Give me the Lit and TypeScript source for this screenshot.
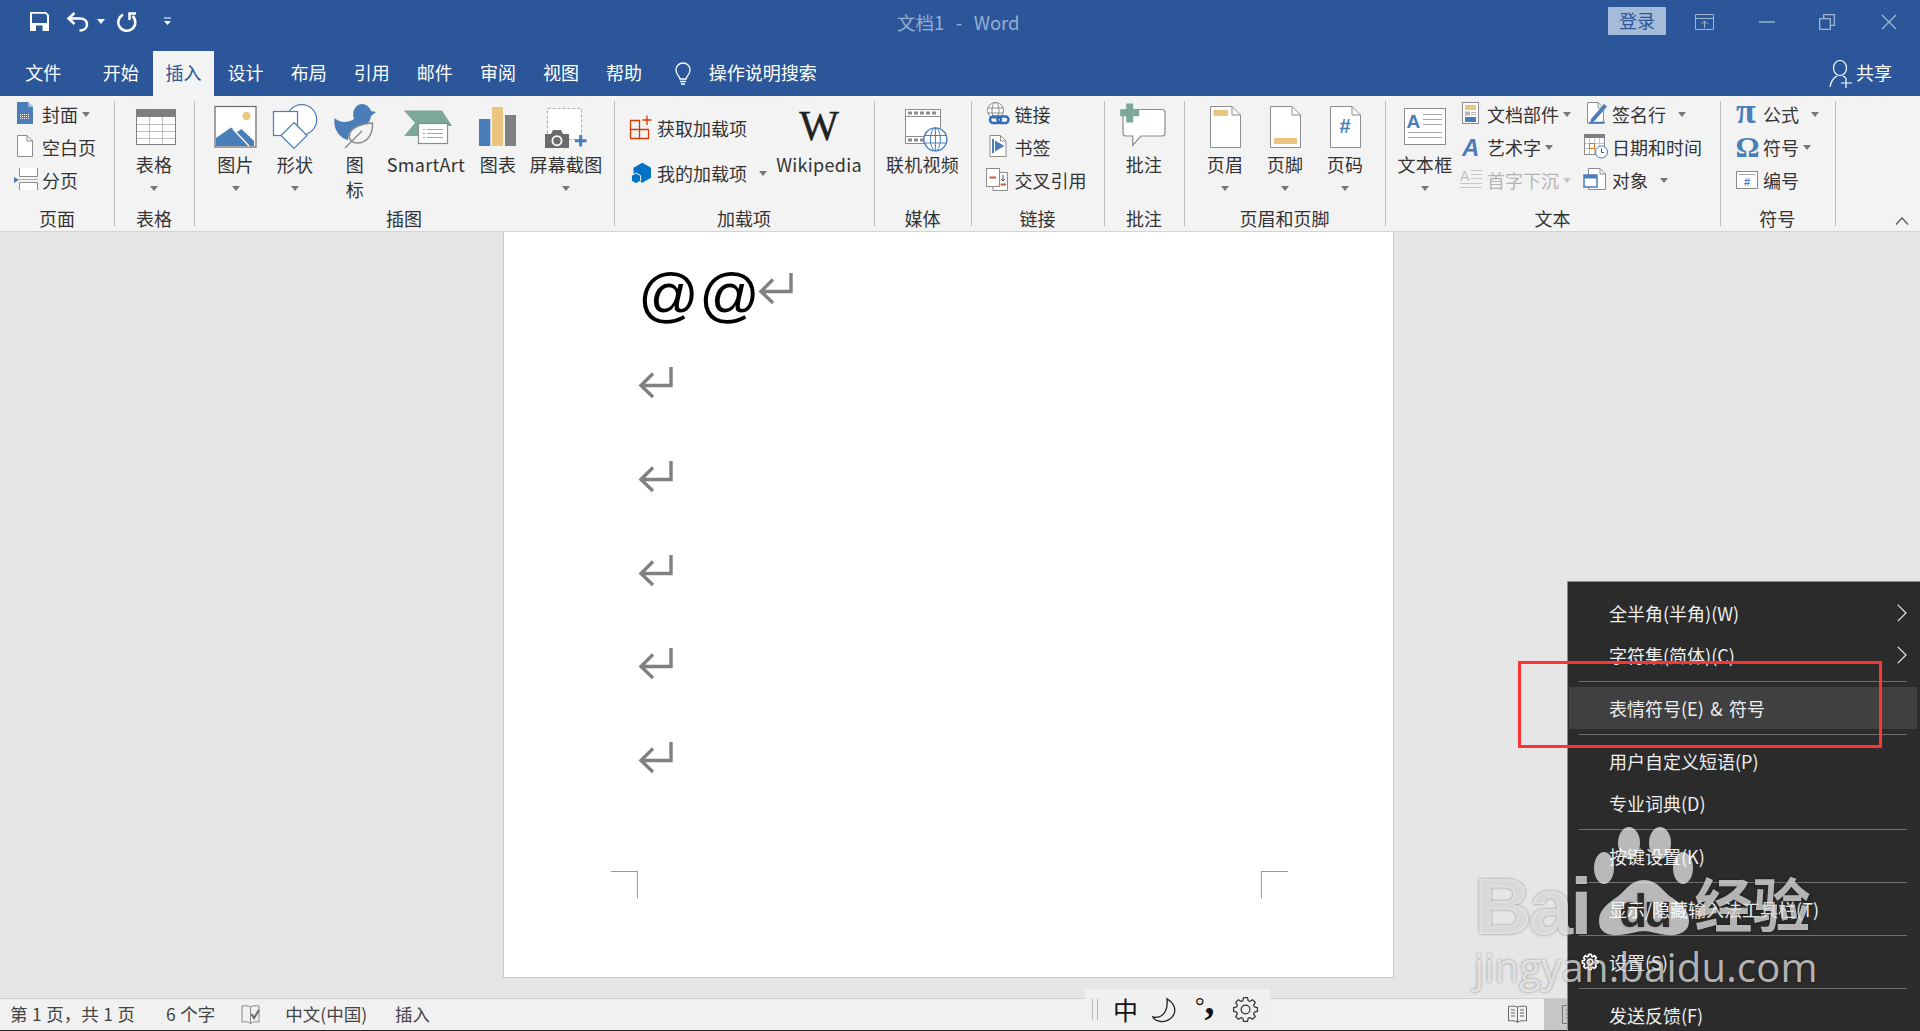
import { LitElement, html, css, svg } from "lit";
import { customElement } from "lit/decorators.js";

const B = "#4A7EB8";
const O = "#EBC57F";
const G = "#7F7F7F";
const T = "#7AA998";
const F = "#8C8C8C";

const pageFold = (x: number, y: number, w: number, h: number, f = 9, stroke = F) => svg`
  <path d="M${x + .5} ${y + .5}H${x + w - f}L${x + w - .5} ${y + f}V${y + h - .5}H${x + .5}Z" fill="#fff" stroke="${stroke}"/>
  <path d="M${x + w - f} ${y + .5}V${y + f}H${x + w - .5}" fill="none" stroke="${stroke}"/>`;

const lgIcons: Record<string, any> = {
  table: svg`<rect x="12.5" y="9.5" width="39" height="35" fill="#fff" stroke="${G}"/><rect x="12" y="9" width="40" height="8" fill="${G}"/>
    <path d="M13 24.5H51M13 31.5H51M13 38.5H51M25.5 17V44M38.5 17V44" stroke="#BDBDBD" fill="none"/>`,
  picture: svg`<rect x="9" y="6.5" width="41" height="40.5" fill="#fff" stroke="#666" stroke-width="1.2"/><ellipse cx="40.5" cy="16" rx="4" ry="4.3" fill="${O}"/>
    <path d="M10 46V38L25 27.5 31 32 35.5 29 48 41V46Z" fill="${B}"/><path d="M27 29L43 46" stroke="#fff" stroke-width="1.3"/>`,
  shapes: svg`<circle cx="36.7" cy="19.7" r="15" fill="#fff" stroke="${B}" stroke-width="1.2"/><rect x="8.5" y="11.5" width="24" height="24" fill="#fff" stroke="${B}" stroke-width="1.2"/>
    <path d="M29 22.5L42 35.5 29 48.5 16 35.5Z" fill="#fff" stroke="${B}" stroke-width="1.2"/>`,
  icons: svg`<path d="M9.5 18C13 22 22 24 29 19C26 10 32 4 37 4C42 4 45 8 46 11L51 12L46 16C45 24 40 26 36 27L24 33L23 40C15 38 8 30 9.5 18Z" fill="${B}"/>
    <path d="M47.5 23C48 35 42 43 32 43C26 43 23 38 25 33C28 26 38 24 47.5 23Z" fill="#F3F3F3" stroke="${F}" stroke-width="1.5"/><path d="M37 31L20 48" stroke="${F}" stroke-width="1.5"/>`,
  smartart: svg`<path d="M8 10.5H46L56 26H30V36H8L19 23Z" fill="${T}"/><rect x="22.5" y="23.5" width="29" height="20" fill="#fff" stroke="${F}" stroke-width="1.2"/>
    <path d="M27 29.5H29M31 29.5H47M27 33.5H29M31 33.5H47M27 37.5H29M31 37.5H47" stroke="#A6A6A6"/>`,
  chart: svg`<rect x="11" y="19" width="11.3" height="27" fill="${B}"/><rect x="24" y="7" width="11" height="39" fill="${O}"/><rect x="37" y="15" width="11" height="31" fill="${G}"/>`,
  screenshot: svg`<rect x="11.5" y="8.5" width="34" height="31" fill="#fff" stroke="#ABABAB" stroke-dasharray="3 2"/>
    <path d="M9 34H15L17 30H25L27 34H33V48H9Z" fill="#6B6B6B"/><circle cx="21" cy="40.7" r="4.6" fill="#6B6B6B" stroke="#fff" stroke-width="1.8"/>
    <path d="M44.7 35V46.5M39 40.7H50.5" stroke="${B}" stroke-width="3"/>`,
  video: svg`<rect x="12.5" y="9.5" width="35" height="34" fill="#fff" stroke="${F}"/><path d="M12 16.5H48M12 36.5H48" stroke="${F}"/>
    <path d="M15 11.5h4v3h-4zM21 11.5h4v3h-4zM27 11.5h4v3h-4zM33 11.5h4v3h-4zM39 11.5h4v3h-4zM15 38.5h4v3h-4zM21 38.5h4v3h-4zM27 38.5h4v3h-4z" fill="${F}"/>
    <circle cx="42.4" cy="39.3" r="11.5" fill="#fff" stroke="${B}" stroke-width="1.3"/><ellipse cx="42.4" cy="39.3" rx="5" ry="11.5" fill="none" stroke="${B}"/>
    <path d="M31.5 35.5H53.5M31.5 43H53.5M42.4 28V51" stroke="${B}"/>`,
  comment: svg`<path d="M12 9.5H48Q51 9.5 51 12.5V33Q51 36 48 36H27L18.7 45.5V36H12Q9 36 9 33V12.5Q9 9.5 12 9.5Z" fill="#fff" stroke="${F}" stroke-width="1.2"/>
    <path d="M15.7 3.5V22.5M6.2 12.7H25.2" stroke="${T}" stroke-width="7"/>`,
  header: svg`${pageFold(15, 6, 31, 42)}<rect x="18.5" y="10" width="14.5" height="6" fill="${O}"/>`,
  footer: svg`${pageFold(15, 6, 31, 42)}<rect x="19" y="38" width="23" height="6" fill="${O}"/>`,
  pagenum: svg`${pageFold(15, 6, 31, 42)}<text x="30" y="33" text-anchor="middle" font-family="Liberation Sans" font-weight="700" font-size="20" fill="${B}">#</text>`,
  textbox: svg`<rect x="9.5" y="8.5" width="41" height="36" fill="#fff" stroke="${F}"/><text x="11.5" y="28" font-family="Liberation Sans" font-weight="700" font-size="19" fill="${B}">A</text>
    <path d="M28 14.5H47M28 19.5H47M28 24.5H47M13 32.5H47M13 37.5H47" stroke="#A6A6A6"/>`,
  wiki: svg`<text x="30" y="40" text-anchor="middle" font-family="Liberation Serif" font-size="42" fill="#222" stroke="#222" stroke-width=".4">W</text>`,
};

const smIcons: Record<string, any> = {
  cover: svg`<path d="M5 1H16L21 6V23H5Z" fill="${B}"/><path d="M16 1V6H21" fill="#9DBBDD"/><path d="M8 13.5h10M8 15.5h10M8 17.5h10" stroke="#fff" stroke-dasharray="1 1"/>`,
  blank: svg`${pageFold(5, 1, 16, 22, 6)}`,
  pagebreak: svg`<path d="M2 10L7 13 2 16Z" fill="${B}"/><path d="M7.5 1V9.5H25.5V1M7.5 23V15.5H25.5V23" fill="#fff" stroke="${F}"/><path d="M6 12.5H26" stroke="#B0B0B0"/>`,
  store: svg`<path d="M3.5 5.5H12.5V23.5H3.5ZM3.5 14.5H21.5V23.5H12.5" fill="none" stroke="#D83B01" stroke-width="1.3"/><path d="M20 .5V10M15.5 5H24.5" stroke="#D83B01" stroke-width="1.3"/>`,
  myaddin: svg`<path d="M15.3 2.7L24 7.7V17.7L15.3 22.7 6.5 17.7V7.7Z" fill="#0072C6"/><path d="M9 13L13.6 15.6V21L9 23.6 4.4 21V15.6Z" fill="#0072C6" stroke="#F3F3F3"/>`,
  link: svg`<circle cx="10.5" cy="9.5" r="8" fill="#fff" stroke="${F}"/><ellipse cx="10.5" cy="9.5" rx="3.5" ry="8" fill="none" stroke="${F}"/><path d="M2.5 7H18.5M2.5 12H18.5" stroke="${F}"/>
    <rect x="5" y="15.5" width="11" height="6.5" rx="3.2" fill="none" stroke="#2E6DB4" stroke-width="2.4"/><rect x="12.5" y="15.5" width="11" height="6.5" rx="3.2" fill="none" stroke="#2E6DB4" stroke-width="2.4"/>`,
  bookmark: svg`${pageFold(4.5, 1, 17, 22, 6)}<path d="M10 6.5L19.5 12 10 17.5Z" fill="${B}"/><rect x="7" y="5" width="2" height="14" fill="${B}"/>`,
  crossref: svg`<path d="M8 5.5H22.5V23.5H8V19.5" fill="#fff" stroke="${F}"/><rect x="1.5" y="1.5" width="13" height="18" fill="#fff" stroke="${F}"/>
    <path d="M4.5 10.5H11" stroke="#D0573C" stroke-width="2"/><path d="M15.5 17.5H21" stroke="#D0573C" stroke-width="2"/><path d="M18 8V14M16 12L18 14 20 12" stroke="#555" fill="none"/>`,
  parts: svg`<rect x="5.5" y="1.5" width="16" height="21" fill="#fff" stroke="${F}"/><rect x="8" y="4" width="11" height="5" fill="${O}"/><rect x="8" y="10.5" width="5" height="4" fill="#B5B5B5"/><rect x="14" y="11" width="5" height="1" fill="#B5B5B5"/><rect x="14" y="13" width="5" height="1" fill="#B5B5B5"/><rect x="8" y="16" width="11" height="5" fill="${B}"/>`,
  wordart: svg`<text x="5" y="22" font-family="Liberation Sans" font-style="italic" font-weight="700" font-size="24" fill="${B}">A</text>`,
  dropcap: svg`<text x="3" y="14" font-family="Liberation Sans" font-size="14" fill="#C2C2C2">A</text><path d="M14 3.5H25M14 7.5H25M14 11.5H25M3 16.5H25M3 20.5H25" stroke="#C8C8C8"/>`,
  sig: svg`${pageFold(5, 1, 17, 22, 6)}<path d="M9 18L22 3 25 5.5 12 20.5 8.5 21.5Z" fill="${B}"/><path d="M7 21.5H23" stroke="${B}" stroke-width="1.5"/>`,
  date: svg`<rect x="2.5" y=".5" width="20" height="20" fill="#fff" stroke="${F}"/><rect x="2" y="0" width="21" height="4" fill="${G}"/><path d="M3 9.5H22M3 14.5H22M7.5 4V20M12.5 4V20M17.5 4V20" stroke="#C4C4C4"/><rect x="7.5" y="9.5" width="5" height="5" fill="#fff" stroke="#D9782D"/>
    <circle cx="19.5" cy="18" r="6" fill="#fff" stroke="${B}"/><path d="M19.5 14.5V18.5H22" fill="none" stroke="#555"/>`,
  object: svg`${pageFold(6, 1, 18, 22, 6)}<rect x="2" y="8" width="13" height="12" fill="#fff" stroke="${B}" stroke-width="1.5"/><rect x="2" y="8" width="13" height="3.5" fill="${B}"/>`,
  pi: svg`<text x="3" y="22" font-family="Liberation Serif" font-weight="700" font-size="36" fill="${B}">π</text>`,
  omega: svg`<text x="2.5" y="23" font-family="Liberation Serif" font-weight="700" font-size="30" fill="${B}">Ω</text>`,
  numbering: svg`<rect x="3.5" y="4.5" width="21" height="17" fill="#fff" stroke="${F}"/><path d="M6 7.5H22" stroke="#A6A6A6"/><text x="14" y="19" text-anchor="middle" font-family="Liberation Sans" font-weight="700" font-size="11" fill="${B}">#</text>`,
};

type Row = { t: string; i: string; c?: "" | "far"; off?: boolean };
type Lg = { t: any; i: string; w: number; c?: boolean };

const lg = (b: Lg) => html`<div class="lg" style="width:${b.w}px">
  <svg class="lgi" viewBox="0 0 60 53" width="60" height="53">${lgIcons[b.i]}</svg>
  <div class="lgt">${b.t}</div>${b.c ? html`<i class="caret down"></i>` : ""}</div>`;

const row = (r: Row) => html`<div class="row ${r.off ? "off" : ""}">
  <svg class="smi" viewBox="0 0 26 26" width="26" height="26">${smIcons[r.i]}</svg>
  <span>${r.t}</span>${r.c !== undefined ? html`<i class="caret ${r.c}"></i>` : ""}</div>`;

const col = (rows: Row[], w: number) => html`<div class="col" style="width:${w}px">${rows.map(row)}</div>`;

const tabs = ["开始", "插入", "设计", "布局", "引用", "邮件", "审阅", "视图", "帮助"];

const menu: (string | { t: string; more?: boolean; hot?: boolean; gear?: boolean })[] = [
  { t: "全半角(半角)(W)", more: true }, { t: "字符集(简体)(C)", more: true }, "-",
  { t: "表情符号(E) & 符号", hot: true }, "-",
  { t: "用户自定义短语(P)" }, { t: "专业词典(D)" }, "-",
  { t: "按键设置(K)" }, "-", { t: "显示/隐藏输入法工具栏(T)" }, "-",
  { t: "设置(S)", gear: true }, "-", { t: "发送反馈(F)" },
];

const ret = html`<svg class="ret" viewBox="0 0 36 31" width="36" height="31"><path d="M33 0V18.5H4M15 6.5L3 18.5 15 30" fill="none" stroke="#808080" stroke-width="3.4"/></svg>`;

const gearPath = (teeth: number, ro: number, ri: number, c: number) => {
  const pts: string[] = [];
  const step = (Math.PI * 2) / teeth;
  for (let k = 0; k < teeth; k++) {
    const a = k * step;
    for (const [da, r] of [[-.36, ri], [-.2, ro], [.2, ro], [.36, ri]] as [number, number][]) {
      const t = a + da * step * 1.05;
      pts.push(`${(c + r * Math.cos(t)).toFixed(2)} ${(c + r * Math.sin(t)).toFixed(2)}`);
    }
  }
  return "M" + pts.join("L") + "Z";
};

const gear = (s: number, stroke: string, sw = 1.2) => html`<svg viewBox="0 0 24 24" width="${s}" height="${s}"><path d="${gearPath(8, 11.6, 8.8, 12)}" fill="none" stroke="${stroke}" stroke-width="${sw}" stroke-linejoin="round"/><circle cx="12" cy="12" r="4.2" fill="none" stroke="${stroke}" stroke-width="${sw}"/></svg>`;

@customElement("app-root")
export class AppRoot extends LitElement {
  static styles = css`
    :host { display: block; position: relative; width: 1920px; height: 1031px; overflow: hidden;
      font-family: "Noto Sans CJK SC", "Liberation Sans", sans-serif; color: #333; background: #e6e6e6; }
    * { box-sizing: border-box; }
    svg { display: block; flex: none; overflow: visible; }
    .titlebar { height: 51px; background: #2b579a; display: grid; grid-template-columns: 1fr auto 1fr; align-items: start; }
    .qat { display: flex; align-items: center; height: 43px; padding-left: 30px; }
    .qat .undo { margin-left: 18px; }
    .qat .undo-c { margin-left: 8px; border-top-color: #fff; }
    .qat .redo { margin-left: 11px; }
    .qat .more { margin-left: 26px; }
    .doc-title { font-size: 18.5px; line-height: 45px; color: #95AED2; white-space: pre; word-spacing: 1.6px; margin-right: 3.5px; }
    .winbtns { display: flex; justify-content: flex-end; align-items: flex-start; }
    .login { width: 58px; height: 28px; margin-top: 7px; background: #A4BBD9; color: #2B579A; font-size: 18px; line-height: 27px; text-align: center; border-radius: 1px; }
    .wb { margin-top: 14px; }
    .wb.a { margin-left: 29px; }
    .wb.b { margin-left: 45px; }
    .wb.c { margin-left: 44px; }
    .wb.d { margin-left: 46px; margin-right: 23px; }
    .tabs { height: 45px; background: #2b579a; display: flex; color: #fff; font-size: 18px; line-height: 42px; }
    .tab { width: 63.1px; text-align: center; flex: none; }
    .tab.file { width: 88.5px; padding-right: 2px; }
    .tab.start { width: 64.5px; }
    .tab.active { background: #f3f3f3; color: #2b579a; width: 61px; }
    .tell { display: flex; align-items: center; margin-left: 18px; gap: 17px; height: 42px; }
    .tell svg { margin-top: 4px; }
    .share { margin-left: auto; display: flex; align-items: center; gap: 3px; height: 42px; margin-right: 28px; }
    .share svg { margin-top: 3px; }
    .ribbon { height: 136px; background: #f3f3f3; border-bottom: 1px solid #d4d4d4; display: flex; position: relative; }
    .group { flex: none; display: flex; flex-direction: column; position: relative; padding-top: 4px; height: 135px; font-size: 18px; line-height: 24px; }
    .group::after { content: ""; position: absolute; right: -1px; top: 5px; height: 125px; width: 1px; background: #bdbdbd; }
    .body { height: 107px; display: flex; align-items: flex-start; }
    .label { text-align: center; height: 23px; line-height: 23px; color: #333; white-space: nowrap; }
    .lg { display: flex; flex-direction: column; align-items: center; flex: none; }
    .lgt { line-height: 25px; text-align: center; white-space: nowrap; margin-top: -1px; letter-spacing: .3px; }
    .caret { display: inline-block; width: 0; height: 0; border-left: 4px solid transparent; border-right: 4px solid transparent; border-top: 5px solid #777; margin-left: 4px; flex: none; }
    .caret.far { margin-left: 12px; }
    .caret.down { margin: 9px 0 0; }
    .col { display: flex; flex-direction: column; flex: none; margin-top: -2.5px; }
    .row { display: flex; align-items: center; height: 33px; white-space: nowrap; }
    .row .smi { margin-right: 4px; }
    .row.off { color: #b4b4b4; }
    .row.off .caret { border-top-color: #c4c4c4; }
    .addins { margin-top: 0; padding-top: 11.5px; gap: 12px; }
    .collapse { position: absolute; right: 11px; bottom: 6px; }
    .doc { height: 766px; background: #e6e6e6; padding-left: 503px; }
    .page { width: 891px; height: 746px; background: #fff; border: 1px solid #c8c8c8; border-top: 0; padding: 9.8px 0 0 134px; position: relative; }
    .line { height: 93.8px; display: flex; align-items: center; }
    .at { font-family: "Liberation Sans", sans-serif; font-size: 60px; line-height: 94px; color: #000; position: relative; top: 6px; margin-right: -2px; }
    .crop { position: absolute; top: 639px; width: 27px; height: 27px; border-top: 1px solid #999; }
    .crop.l { left: 107px; border-right: 1px solid #999; }
    .crop.r { right: 105px; border-left: 1px solid #999; }
    .status { height: 33px; background: #f1f1f1; border-top: 1px solid #d0d0d0; border-bottom: 1px solid #222; display: flex; align-items: center; font-size: 17.5px; color: #444; padding-left: 10px; line-height: 28px; word-spacing: .6px; }
    .status span { margin-bottom: 2px; }
    .status .s2 { margin-left: 31px; }
    .status .s3 { margin-left: 26px; }
    .status .s4 { margin-left: 24px; }
    .status .s5 { margin-left: 28px; }
    .status .view { margin-left: auto; margin-right: 17px; }
    .status .activeview { width: 376px; height: 31px; background: #c6c6c6; padding: 6px 0 0 18px; }
    .ime { position: absolute; left: 1085px; top: 989px; width: 185px; height: 40px; background: #f0f0f0; display: flex; align-items: flex-start; padding: 9px 0 0 7px; color: #222; }
    .grip { width: 6px; height: 21px; margin-top: 1px; border-left: 1.5px solid #b8b8b8; border-right: 1.5px solid #b8b8b8; margin-right: 15px; }
    .zh { font-size: 25px; line-height: 25px; width: 25px; margin-top: -1px; color: #111; }
    .moon { margin: 0 0 0 14px; }
    .punct { margin-left: 19px; width: 20px; height: 24px; display: flex; font-family: "Liberation Serif", serif; color: #111; position: relative; }
    .deg { font-size: 24px; line-height: 24px; margin-top: -4px; }
    .com { font-size: 40px; font-weight: 700; line-height: 24px; margin: -9px 0 0 0; }
    .ime .g { margin: -1px 0 0 18px; }
    .menu { position: absolute; left: 1567px; top: 581px; width: 353px; height: 450px; background: #2b2b2b; border-left: 1px solid #8c8c8c; border-top: 1px solid #8c8c8c; padding-top: 10px; overflow: hidden; color: #eee; font-size: 18px; }
    .mi { height: 42px; display: flex; align-items: center; padding: 0 13px 0 41px; position: relative; white-space: nowrap; word-spacing: 2.5px; line-height: 40px; }
    .mi.hot { background: #404040; margin: 0 3px 0 1px; padding-left: 40px; }
    .mi .chev { margin-left: auto; }
    .mi .gear { position: absolute; left: 14px; top: 13px; }
    .sep { height: 1px; margin: 5px 13px 5px 11px; background: #6f6f6f; }
    .redbox { position: absolute; left: 1518px; top: 661px; width: 364px; height: 87px; border: 3px solid #f33; }
    .wm { position: absolute; left: 1474px; top: 830px; width: 350px; height: 165px; color: rgba(255,255,255,.67); text-shadow: 0 0 3px rgba(0,0,0,.4); pointer-events: none; }
    .wm1 { display: flex; align-items: flex-start; height: 108px; }
    .bai { font-family: "Liberation Sans", sans-serif; font-weight: 700; font-size: 80px; line-height: 92px; letter-spacing: -3px; margin-top: 31px; }
    .paw { margin-left: 1px; }
    .jing { font-family: "Noto Sans CJK SC", sans-serif; font-weight: 700; font-size: 58px; line-height: 66px; margin: 39px 0 0 -1px; }
    .url { font-family: "Open Sans", sans-serif; font-size: 40px; line-height: 50px; letter-spacing: .2px; margin-top: 4px; white-space: nowrap; }
  `;

  render() {
    return html`
      <header class="titlebar">
        <div class="qat">
          <svg viewBox="0 0 19 19" width="19" height="19"><path d="M0 0H16L19 3V19H0Z" fill="#fff"/><path d="M2 1.8H15.4L17 3.4V11H2Z" fill="#2b579a"/><rect x="6" y="13.5" width="6.5" height="5.5" fill="#2b579a"/></svg>
          <svg class="undo" viewBox="0 0 22 21" width="22" height="21"><path d="M7.5 2L1.5 7.5 7.5 13M2 7.5H13C17.5 7.5 20 10 20 13.5C20 17 17 19.5 12.5 19.5" fill="none" stroke="#fff" stroke-width="2.5"/></svg>
          <i class="caret undo-c"></i>
          <svg class="redo" viewBox="0 0 21 21" width="21" height="21"><path d="M7 3.7A8.5 8.5 0 1 0 16.5 5" fill="none" stroke="#fff" stroke-width="2.5"/><path d="M20 2.5H13.5V9" fill="none" stroke="#fff" stroke-width="2.5"/></svg>
          <svg class="more" viewBox="0 0 9 9" width="9" height="9"><path d="M1 1H8" stroke="#fff"/><path d="M1 4H8L4.5 8Z" fill="#fff"/></svg>
        </div>
        <div class="doc-title">文档1  -  Word</div>
        <div class="winbtns">
          <div class="login">登录</div>
          <svg class="wb a" viewBox="0 0 19 16" width="19" height="16"><path d="M.5.5H18.5V15.5H.5ZM.5 4.5H18.5M9.5 14V7.5M6.5 10L9.5 7 12.5 10" fill="none" stroke="#9FB5D3"/></svg>
          <svg class="wb b" viewBox="0 0 16 16" width="16" height="16"><path d="M0 8H16" stroke="#9FB5D3" stroke-width="1.4"/></svg>
          <svg class="wb c" viewBox="0 0 16 16" width="16" height="16"><path d="M.7 4.7H11.3V15.3H.7ZM4.7 4.5V.7H15.3V11.3H11.5" fill="none" stroke="#9FB5D3" stroke-width="1.3"/></svg>
          <svg class="wb d" viewBox="0 0 16 16" width="16" height="16"><path d="M1 1L15 15M15 1L1 15" stroke="#9FB5D3" stroke-width="1.4"/></svg>
        </div>
      </header>
      <nav class="tabs">
        <div class="tab file">文件</div>
        ${tabs.map((t) => html`<div class="tab ${t === "插入" ? "active" : t === "开始" ? "start" : ""}">${t}</div>`)}
        <div class="tell">
          <svg viewBox="0 0 18 24" width="18" height="24"><path d="M6 17C5.5 14 2 12.5 2 8C2 4 5 1 9 1S16 4 16 8C16 12.5 12.5 14 12 17ZM6 19.5H12M7 22H11" fill="none" stroke="#fff" stroke-width="1.3"/></svg>
          <span>操作说明搜索</span>
        </div>
        <div class="share">
          <svg viewBox="0 0 24 28" width="24" height="28"><ellipse cx="11" cy="8" rx="6.5" ry="7.5" fill="none" stroke="#fff" stroke-width="1.2"/><path d="M1 27C2 21 4 18 8 16M14 16C15 16.5 16 17 16.5 18M17 18V28M12 23H23" fill="none" stroke="#fff" stroke-width="1.2"/></svg>
          <span>共享</span>
        </div>
      </nav>
      <section class="ribbon">
        ${this.group("页面", 114, html`<div class="body" style="padding-left:12px">${col([{ t: "封面", i: "cover", c: "" }, { t: "空白页", i: "blank" }, { t: "分页", i: "pagebreak" }], 100)}</div>`)}
        ${this.group("表格", 80, html`<div class="body">${lg({ t: "表格", i: "table", w: 80, c: true })}</div>`)}
        ${this.group("插图", 420, html`<div class="body" style="padding-left:12px">
          ${lg({ t: "图片", i: "picture", w: 59, c: true })}${lg({ t: "形状", i: "shapes", w: 60, c: true })}
          ${lg({ t: html`图<br />标`, i: "icons", w: 60 })}${lg({ t: "SmartArt", i: "smartart", w: 82 })}
          ${lg({ t: "图表", i: "chart", w: 62 })}${lg({ t: "屏幕截图", i: "screenshot", w: 74, c: true })}</div>`)}
        ${this.group("加载项", 260, html`<div class="body" style="padding-left:13px">
          <div class="col addins" style="width:150px">${row({ t: "获取加载项", i: "store" })}${row({ t: "我的加载项", i: "myaddin", c: "far" })}</div>
          ${lg({ t: "Wikipedia", i: "wiki", w: 84 })}</div>`)}
        ${this.group("媒体", 97, html`<div class="body">${lg({ t: "联机视频", i: "video", w: 97 })}</div>`)}
        ${this.group("链接", 133, html`<div class="body" style="padding-left:13.5px">${col([{ t: "链接", i: "link" }, { t: "书签", i: "bookmark" }, { t: "交叉引用", i: "crossref" }], 110)}</div>`)}
        ${this.group("批注", 80, html`<div class="body">${lg({ t: "批注", i: "comment", w: 80 })}</div>`)}
        ${this.group("页眉和页脚", 201, html`<div class="body" style="padding-left:11px">${lg({ t: "页眉", i: "header", w: 60, c: true })}${lg({ t: "页脚", i: "footer", w: 60, c: true })}${lg({ t: "页码", i: "pagenum", w: 60, c: true })}</div>`)}
        ${this.group("文本", 335, html`<div class="body" style="padding-left:8px">${lg({ t: "文本框", i: "textbox", w: 64, c: true })}
          ${col([{ t: "文档部件", i: "parts", c: "" }, { t: "艺术字", i: "wordart", c: "" }, { t: "首字下沉", i: "dropcap", c: "", off: true }], 125)}
          ${col([{ t: "签名行", i: "sig", c: "far" }, { t: "日期和时间", i: "date" }, { t: "对象", i: "object", c: "far" }], 130)}</div>`)}
        ${this.group("符号", 114.5, html`<div class="body" style="padding-left:13px">${col([{ t: "公式", i: "pi", c: "far" }, { t: "符号", i: "omega", c: "" }, { t: "编号", i: "numbering" }], 100)}</div>`)}
        <svg class="collapse" viewBox="0 0 14 8" width="14" height="8"><path d="M1 7.5L7 1 13 7.5" fill="none" stroke="#555" stroke-width="1.2"/></svg>
      </section>
      <main class="doc">
        <div class="page">
          <div class="line"><span class="at">@@</span>${ret}</div>
          ${[0, 1, 2, 3, 4].map(() => html`<div class="line">${ret}</div>`)}
          <div class="crop l"></div><div class="crop r"></div>
        </div>
      </main>
      <footer class="status">
        <span>第 1 页，共 1 页</span><span class="s2">6 个字</span>
        <svg class="s3" viewBox="0 0 20 22" width="20" height="22"><path d="M9.5 3C7 1.5 4 1.5 1 2V18C4 17.5 7 17.5 9.5 19.5C12 17.5 15 17.5 18 18V2C15 1.5 12 1.5 9.5 3V19.5" fill="none" stroke="#888"/><path d="M10.5 10L13 14 18 6" fill="none" stroke="#666" stroke-width="2"/></svg>
        <span class="s4">中文(中国)</span><span class="s5">插入</span>
        <svg class="view" viewBox="0 0 19 19" width="19" height="19"><path d="M9.5 2C7 1 3 1 .5 1.5V16C3 15.5 7 15.5 9.5 17C12 15.5 16 15.5 18.5 16V1.5C16 1 12 1 9.5 2V18M3 5H7M3 8H7M3 11H7M12 5H16M12 8H16M12 11H16" fill="none" stroke="#666"/></svg>
        <div class="activeview"><svg viewBox="0 0 19 19" width="19" height="19"><path d="M.5.5H18.5V18.5H.5ZM4 5H15M4 9H15M4 13H15" fill="none" stroke="#777"/></svg></div>
      </footer>
      <div class="ime">
        <div class="grip"></div>
        <span class="zh">中</span>
        <svg class="moon" viewBox="0 0 24 24" width="24" height="24"><path d="M15 .7C22 5 24 11 22 16C20 21 14 24 9 23.5C5 23 2 21.5 .8 19C6 20 11 18 13.5 13C15.5 9 15.5 5 15 .7Z" fill="none" stroke="#222" stroke-width="1.3"/></svg>
        <span class="punct"><span class="deg">°</span><span class="com">,</span></span>
        <span class="g">${gear(25, "#333")}</span>
      </div>
      <aside class="menu">
        ${menu.map((m) => m === "-" ? html`<div class="sep"></div>` : html`
          <div class="mi ${(m as any).hot ? "hot" : ""}">
            ${(m as any).gear ? html`<span class="gear">${gear(16, "#fff", 2.6)}</span>` : ""}
            <span>${(m as any).t}</span>
            ${(m as any).more ? html`<svg class="chev" viewBox="0 0 10 18" width="10" height="18"><path d="M.8 .8L9 9 .8 17.2" fill="none" stroke="#e8e8e8" stroke-width="1.2"/></svg>` : ""}
          </div>`)}
      </aside>
      <div class="redbox"></div>
      <div class="wm">
        <div class="wm1">
          <span class="bai">Bai</span>
          <svg class="paw" viewBox="0 0 105 108" width="105" height="108">
            <defs><mask id="du" maskUnits="userSpaceOnUse" x="0" y="0" width="105" height="108"><rect width="105" height="108" fill="#fff"/>
              <text x="53" y="97" text-anchor="middle" font-family="Liberation Sans" font-weight="700" font-size="46" letter-spacing="-3" fill="#000">du</text></mask></defs>
            <g fill="rgba(255,255,255,.67)"><ellipse cx="38" cy="13" rx="11" ry="16"/><ellipse cx="69" cy="13" rx="11" ry="16"/><ellipse cx="13" cy="38" rx="10" ry="16"/><ellipse cx="92" cy="38" rx="10" ry="16"/>
            <path mask="url(#du)" d="M53 50C67 50 72 62 80 67C90 74 98 80 98 91C98 102 88 106 76 105C66 104 60 101 53 101C46 101 40 104 28 105C16 106 8 102 8 91C8 80 16 74 26 67C34 62 39 50 53 50Z"/></g>
          </svg>
          <span class="jing">经验</span>
        </div>
        <div class="url">jingyan.baidu.com</div>
      </div>
    `;
  }

  group(label: string, w: number, body: unknown) {
    return html`<div class="group" style="width:${w}px">${body}<div class="label">${label}</div></div>`;
  }
}
